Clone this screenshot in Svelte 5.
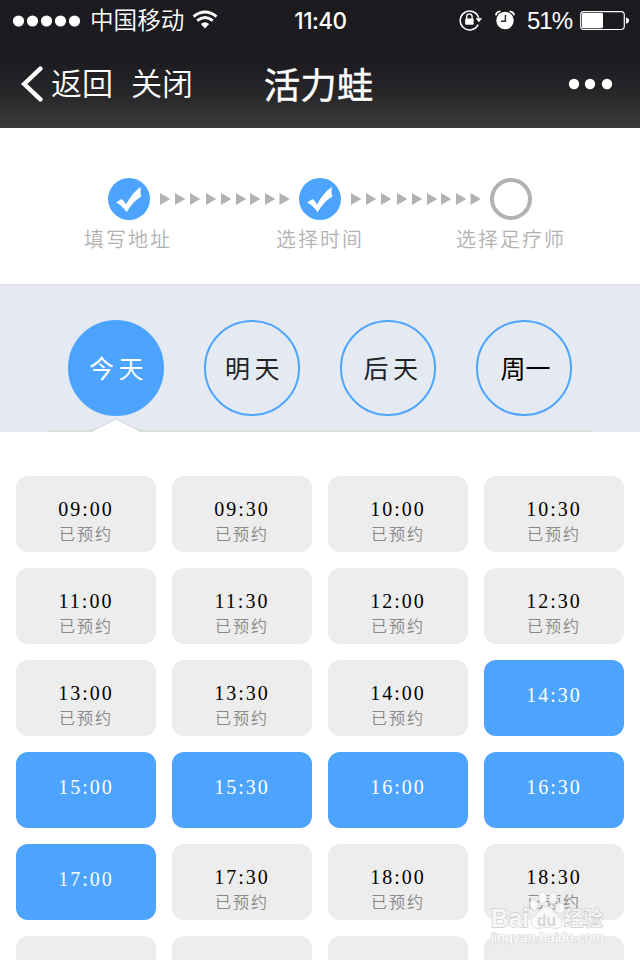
<script>
  const steps = [
    { label: '填写地址', done: true },
    { label: '选择时间', done: true },
    { label: '选择足疗师', done: false }
  ];
  const days = ['今天', '明天', '后天', '周一'];
  const arrows = [0, 15, 30, 46, 61, 76, 90, 105, 119.5];
  const free = new Set(['14:30', '15:00', '15:30', '16:00', '16:30', '17:00']);
  const slots = Array.from({ length: 24 }, (_, i) => {
    const minutes = 9 * 60 + i * 30;
    const time = String(Math.floor(minutes / 60)).padStart(2, '0') + ':' + String(minutes % 60).padStart(2, '0');
    return { time, free: free.has(time), hidden: i >= 20 };
  });
</script>

<div class="screen">
  <header>
    <div class="status">
      <div class="left">
        <svg width="69" height="14" viewBox="0 0 69 14" fill="#fff">
          {#each [5.5, 19.5, 33.5, 47.5, 61.5] as cx}<circle {cx} cy="7" r="5.6" />{/each}
        </svg>
        <span class="carrier">中国移动</span>
        <svg class="wifi" width="26" height="20" viewBox="0 0 26 20" fill="none" stroke="#fff" stroke-width="2.9">
          <path d="M1.5 6.6Q13 -2.4 24.5 6.6" />
          <path d="M5.2 10.6Q13 4.3 20.8 10.6" />
          <path d="M8.8 14Q13 10.6 17.2 14L13 18.4Z" fill="#fff" stroke="none" />
        </svg>
      </div>
      <span class="clock">11:40</span>
      <div class="right">
        <svg width="24" height="22" viewBox="0 0 24 22">
          <path d="M19.1 15.6A9.4 9.4 0 1 1 19.7 9" fill="none" stroke="#fff" stroke-width="1.5" />
          <path d="M16.6 9.2H23.2L19.9 13.2Z" fill="#fff" />
          <rect x="6.2" y="9.4" width="8.4" height="6.4" rx=".8" fill="#fff" />
          <path d="M7.7 10V7.6a2.7 2.7 0 0 1 5.4 0V10" fill="none" stroke="#fff" stroke-width="1.3" />
        </svg>
        <svg class="alarm" width="20" height="20" viewBox="0 0 20 20">
          <circle cx="10" cy="10.5" r="8.7" fill="#fff" />
          <path d="M.9 5.4Q1.4 1.7 5.4 1.4M19.1 5.4Q18.6 1.7 14.6 1.4" fill="none" stroke="#fff" stroke-width="1.8" />
          <path d="M10.4 5V11.2H6" fill="none" stroke="#222126" stroke-width="1.4" />
        </svg>
        <span class="percent">51%</span>
        <svg class="battery" width="50" height="20" viewBox="0 0 50 20">
          <rect x=".7" y=".7" width="43.6" height="17.8" rx="3.2" fill="none" stroke="#fff" stroke-width="1.2" />
          <rect x="2" y="2" width="21" height="15.2" rx="1.4" fill="#fff" />
          <path d="M46 6.4Q49 7 49 9.6T46 12.8Z" fill="#fff" />
        </svg>
      </div>
    </div>
    <nav>
      <div class="links">
        <svg width="22" height="36" viewBox="0 0 22 36"><path d="M19.4 2.6L3.2 18L19.4 33.4" fill="none" stroke="#fff" stroke-width="4.4" stroke-linecap="round" /></svg>
        <span class="back">返回</span>
        <span class="close">关闭</span>
      </div>
      <h1>活力蛙</h1>
      <svg class="more" width="46" height="12" viewBox="0 0 46 12" fill="#fff">
        <circle cx="6" cy="6" r="5.2" /><circle cx="22" cy="6" r="5.2" /><circle cx="39" cy="6" r="5.2" />
      </svg>
    </nav>
  </header>

  <section class="steps">
    {#each steps as step, i}
      {#if i > 0}
        <svg class="arrows" width="130" height="12" viewBox="0 0 130 12" fill="#b2b2b2">
          {#each arrows as x}<path d="M{x} 0L{x + 10.3} 6L{x} 12Z" />{/each}
        </svg>
      {/if}
      <div class="step">
        <svg width="42" height="42" viewBox="0 0 42 42">
          {#if step.done}
            <circle cx="21" cy="21" r="21" fill="#4ca4ff" />
            <path d="M8 24.6L13.6 21Q16.6 23.2 18 26.6Q24.5 14.2 32.8 9Q32 14.5 33.2 18.4Q23.8 24.4 18.7 34.2Q13.6 27.2 8 24.6Z" fill="#fff" />
          {:else}
            <circle cx="21" cy="21" r="19" fill="#fff" stroke="#b2b2b2" stroke-width="4" />
          {/if}
        </svg>
        <span>{step.label}</span>
      </div>
    {/each}
  </section>

  <section class="days">
    <div class="tabs">
      {#each days as day, i}
        <div class="day" class:active={i === 0} class:later={i === 2} class:weekday={i === 3}><span>{day}</span></div>
      {/each}
    </div>
    <svg class="notch" width="52" height="14" viewBox="0 0 52 14">
      <path d="M1 14L26 .8L51 14Z" fill="#fff" />
      <path d="M1 13.6L26 .8L51 13.6" fill="none" stroke="#d9dbde" stroke-width="1.3" />
    </svg>
  </section>

  <section class="slots">
    {#each slots as slot}
      <div class="slot" class:free={slot.free}>
        {#if !slot.hidden}
          <span class="time">{slot.time}</span>
          {#if !slot.free}<span class="note">已预约</span>{/if}
        {/if}
      </div>
    {/each}
  </section>

  <svg class="watermark" width="128" height="66" viewBox="0 0 128 66">
    <g fill="#fafafa" fill-opacity=".9" stroke="#d4d4d4" stroke-width=".8">
      <ellipse cx="46" cy="21" rx="4.2" ry="5.6" transform="rotate(-12 46 21)" />
      <ellipse cx="54.5" cy="13.5" rx="4.2" ry="6" />
      <ellipse cx="65" cy="14" rx="4.2" ry="6" transform="rotate(8 65 14)" />
      <ellipse cx="72" cy="24" rx="4.8" ry="5.2" />
      <path d="M59 22.5C64 22.5 65 28 70 32C77 37 75 45 67 44.4Q59 42 51 44.4C42 45 41 36 46 32C52 28 53 22.5 59 22.5Z" />
    </g>
    <g font-family="Liberation Sans, sans-serif" fill="#f7f7f7" stroke="#cfcfcf" stroke-width="1.5" paint-order="stroke">
      <text x="3" y="42.5" font-size="25" font-weight="700" textLength="38" lengthAdjust="spacingAndGlyphs">Bai</text>
      <text x="49" y="42" font-size="16" font-weight="700" fill="#d6d6d6" stroke="none" textLength="19" lengthAdjust="spacingAndGlyphs">du</text>
      <text x="76" y="42" font-size="20" font-weight="500" font-family="Noto Sans CJK SC, sans-serif" textLength="39" lengthAdjust="spacingAndGlyphs">经验</text>
      <text x="3" y="57.5" font-size="12.5" fill="#fff" stroke="#dedede" textLength="113" lengthAdjust="spacingAndGlyphs">jingyan.baidu.com</text>
    </g>
  </svg>
</div>

<style>
  :global(body) { margin: 0; background: #fff; }
  .screen {
    position: relative;
    width: 640px;
    height: 960px;
    overflow: hidden;
    background: #fff;
    font-family: 'Noto Sans CJK SC', sans-serif;
    font-weight: 350;
  }
  svg { display: block; flex: none; }
  header {
    height: 128px;
    color: #fff;
    background: linear-gradient(#1b1a1f 0, #1d1c21 50%, #28282b 75%, #3b3b3d 100%);
  }
  .status, nav { display: grid; grid-template-columns: 1fr auto 1fr; align-items: center; box-sizing: border-box; }
  .status { height: 40px; padding: 0 10px 0 13px; }
  .left, .right, .links { display: flex; align-items: center; }
  .left { height: 40px; }
  .carrier { margin: -3px 0 0 8px; font-size: 23.6px; line-height: 40px; }
  .wifi { margin: -2px 0 0 8px; }
  .clock { padding-top: 1px; font: 500 22.5px/40px Inter, sans-serif; letter-spacing: -.5px; margin-left: -2px; }
  .right { justify-content: flex-end; height: 40px; }
  .right > svg { margin-top: -1px; }
  .right .alarm { margin: -2px 0 0 12px; }
  .percent { margin: 1px 8px 0 12px; font: 24px/38px 'Liberation Sans', sans-serif; letter-spacing: -1px; }
  .right .battery { margin-top: 1px; }
  nav { height: 88px; padding: 0 26px 0 21px; }
  .back, .close { font-size: 31px; line-height: 88px; margin-top: -4px; }
  .back { margin-left: 8px; }
  .close { margin-left: 18px; }
  h1 { margin: 0 0 0 2px; font-size: 36.5px; line-height: 88px; font-weight: 400; -webkit-text-stroke: .35px #fff; }
  .more { justify-self: end; }

  .steps { display: flex; justify-content: center; height: 156px; box-sizing: border-box; padding-top: 50px; }
  .step { width: 42px; display: flex; flex-direction: column; align-items: center; }
  .step span { white-space: nowrap; margin-top: 4px; font-size: 20px; line-height: 29px; letter-spacing: 2px; color: #b2b2b2; }
  .step:first-child span { margin-left: -2px; }
  .arrows { margin: 15px 9px 0 10px; }

  .days { position: relative; height: 148px; box-sizing: border-box; border-top: 2px solid #e0e2e4; background: #e5eaf2; padding: 0 48px; }
  .tabs { display: flex; gap: 40px; height: 146px; box-sizing: border-box; padding: 34px 20px 0; border-bottom: 2px solid #dcdcdc; }
  .day { width: 96px; height: 96px; box-sizing: border-box; border: 2px solid #4ca4ff; border-radius: 50%; display: flex; align-items: center; justify-content: center; font-size: 25px; letter-spacing: 4.5px; color: #222; font-weight: 400; }
  .day span { margin: -2px 0 0 5px; }
  .day.later span { margin-left: 10px; }
  .day.active { background: #4ca4ff; color: #fff; }
  .day.weekday { letter-spacing: 0; color: #000; }
  .day.weekday span { margin-left: 3px; }
  .notch { position: absolute; left: 90px; bottom: 0; }

  .slots { display: grid; grid-template-columns: repeat(4, 140px); grid-auto-rows: 76px; gap: 16px; padding: 44px 16px 0; }
  .slot { display: flex; flex-direction: column; align-items: center; box-sizing: border-box; padding-top: 21px; border-radius: 12px; background: #ededed; }
  .slot.free { background: #4ca4ff; padding-top: 23px; }
  .time { font: 20px/24px 'Liberation Serif', serif; letter-spacing: 2px; color: #000; }
  .free .time { color: #fff; }
  .note { font-size: 16px; line-height: 24px; letter-spacing: 2px; color: #888; }
  .watermark { position: absolute; left: 488px; top: 884px; }
</style>
